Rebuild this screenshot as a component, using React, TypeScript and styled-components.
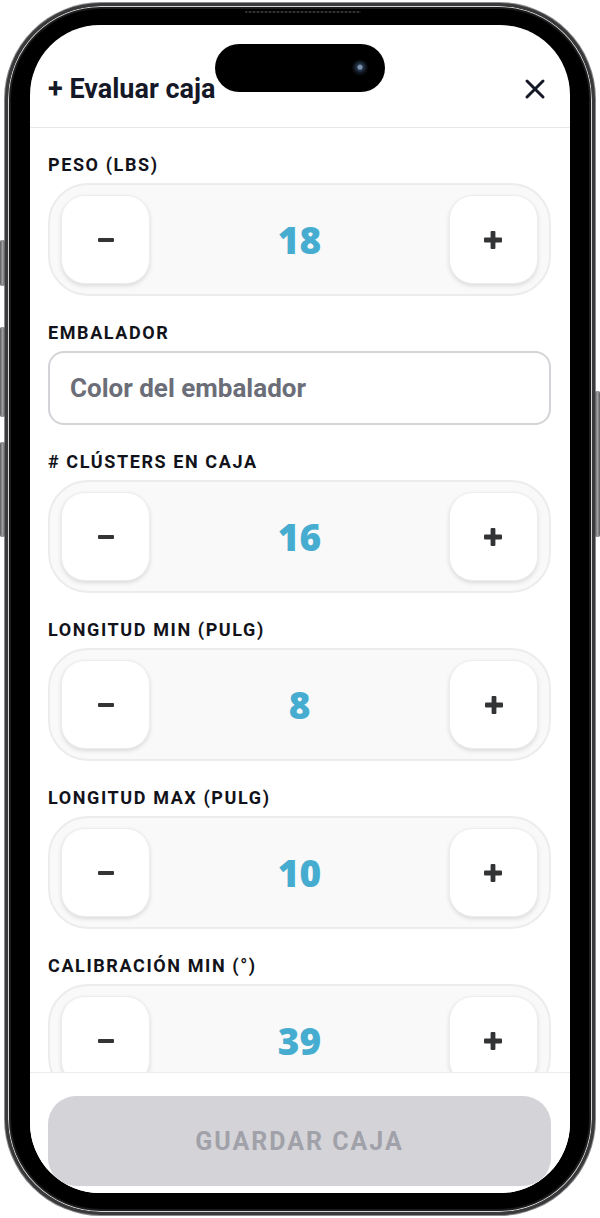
import styled, { createGlobalStyle } from "styled-components";

const GlobalStyle = createGlobalStyle`
    * {
        box-sizing: border-box;
    }
    html, body {
        margin: 0;
        padding: 0;
        background: #ffffff;
        font-family: Roboto, "Liberation Sans", sans-serif;
    }
`;

type Field = { label: string; value?: number; placeholder?: string };

const fields: Field[] = [
    { label: "PESO (LBS)", value: 18 },
    { label: "EMBALADOR", placeholder: "Color del embalador" },
    { label: "# CLÚSTERS EN CAJA", value: 16 },
    { label: "LONGITUD MIN (PULG)", value: 8 },
    { label: "LONGITUD MAX (PULG)", value: 10 },
    { label: "CALIBRACIÓN MIN (°)", value: 39 },
];

const MinusIcon = () => (
    <svg width="18" height="18" viewBox="0 0 18 18">
        <rect x="1" y="7" width="16" height="4" rx="1" fill="#333436" />
    </svg>
);

const PlusIcon = () => (
    <svg width="20" height="20" viewBox="0 0 20 20">
        <rect x="1" y="7.6" width="18" height="4.8" rx="1" fill="#333436" />
        <rect x="7.6" y="1" width="4.8" height="18" rx="1" fill="#333436" />
    </svg>
);

const CloseIcon = () => (
    <svg width="22" height="22" viewBox="0 0 22 22">
        <path d="M3 3 L19 19 M19 3 L3 19" stroke="#141827" strokeWidth="3" strokeLinecap="round" />
    </svg>
);

export default function App() {
    return (
        <>
            <GlobalStyle />
            <Page>
                <Phone>
                    <SideButton side="left" top={234} length={46} />
                    <SideButton side="left" top={321} length={90} />
                    <SideButton side="left" top={436} length={95} />
                    <SideButton side="right" top={385} length={146} />
                    <Grille />
                    <Screen>
                        <Island>
                            <Camera />
                        </Island>
                        <Header>
                            <Title>+ Evaluar caja</Title>
                            <CloseButton aria-label="Cerrar">
                                <CloseIcon />
                            </CloseButton>
                        </Header>
                        <Content>
                            {fields.map((field) => (
                                <Section key={field.label}>
                                    <Label>{field.label}</Label>
                                    {field.placeholder ? (
                                        <TextInput placeholder={field.placeholder} />
                                    ) : (
                                        <Stepper>
                                            <StepButton aria-label="Restar">
                                                <MinusIcon />
                                            </StepButton>
                                            <Value>{field.value}</Value>
                                            <StepButton aria-label="Sumar">
                                                <PlusIcon />
                                            </StepButton>
                                        </Stepper>
                                    )}
                                </Section>
                            ))}
                        </Content>
                        <Footer>
                            <SaveButton disabled>GUARDAR CAJA</SaveButton>
                        </Footer>
                    </Screen>
                </Phone>
            </Page>
        </>
    );
}

const Page = styled.div`
    width: 600px;
    height: 1218px;
    padding-top: 3px;
    background: #ffffff;
    overflow: hidden;
`;

const Phone = styled.div`
    position: relative;
    width: 590px;
    height: 1212px;
    margin: 0 auto;
    padding: 19px 22px;
    border-radius: 96px;
    border: 3px solid #3a3a3c;
    background: #000000;
    box-shadow: 0 0 0 1px #8c8c8e, inset 0 0 0 1px #d6d6d6, inset 0 0 0 3px #1c1c1c;
`;

const SideButton = styled.div<{ side: "left" | "right"; top: number; length: number }>`
    position: absolute;
    top: ${(p) => p.top}px;
    ${(p) => (p.side === "left" ? "left: -8px;" : "right: -8px;")}
    width: 5px;
    height: ${(p) => p.length}px;
    border-radius: 2px;
    background: linear-gradient(90deg, #5a5a5c, #a0a0a2, #5a5a5c);
`;

const Grille = styled.div`
    position: absolute;
    top: 5px;
    left: 237px;
    width: 116px;
    height: 2px;
    border-radius: 1px;
    background: repeating-linear-gradient(90deg, #333 0 2px, #111 2px 4px);
`;

const Screen = styled.div`
    position: relative;
    display: flex;
    flex-direction: column;
    width: 540px;
    height: 1168px;
    border-radius: 70px;
    overflow: hidden;
    background: #ffffff;
`;

const Island = styled.div`
    position: absolute;
    top: 19px;
    left: 185px;
    width: 170px;
    height: 48px;
    border-radius: 24px;
    background: #000000;
    display: flex;
    align-items: center;
    justify-content: flex-end;
    padding-right: 17px;
    z-index: 2;
`;

const Camera = styled.div`
    width: 16px;
    height: 16px;
    border-radius: 50%;
    background: radial-gradient(circle at 50% 45%, #7d93ab 0 2px, #2a3a50 3px, #0e141d 6px, #06070a 8px);
`;

const Header = styled.div`
    flex: none;
    display: flex;
    align-items: center;
    justify-content: space-between;
    height: 103px;
    padding: 25px 24px 0 18px;
    border-bottom: 1px solid #e6e6e8;
`;

const Title = styled.h1`
    margin: 0;
    font-size: 27px;
    font-weight: 700;
    color: #141827;
`;

const CloseButton = styled.button`
    display: flex;
    align-items: center;
    justify-content: center;
    padding: 0;
    border: none;
    background: none;
`;

const Content = styled.div`
    flex: 1;
    overflow: hidden;
    display: flex;
    flex-direction: column;
    gap: 27px;
    padding: 27px 19px 0 18px;
`;

const Section = styled.div`
    display: flex;
    flex-direction: column;
    gap: 8px;
    flex: none;
`;

const Label = styled.span`
    font-size: 18px;
    line-height: 20px;
    font-weight: 700;
    letter-spacing: 1.6px;
    color: #12131a;
`;

const Stepper = styled.div`
    display: flex;
    align-items: center;
    justify-content: space-between;
    height: 113px;
    padding: 0 11px;
    border-radius: 40px;
    border: 2px solid #ececee;
    background: #f9f9f9;
`;

const StepButton = styled.button`
    display: flex;
    align-items: center;
    justify-content: center;
    width: 89px;
    height: 89px;
    border-radius: 24px;
    border: 1px solid #ededed;
    background: #ffffff;
    box-shadow: 0 2px 4px rgba(0, 0, 0, 0.12);
`;

const Value = styled.span`
    font-family: "Open Sans", Roboto, sans-serif;
    font-size: 37px;
    font-weight: 800;
    color: #47add0;
`;

const TextInput = styled.input`
    height: 74px;
    padding: 0 20px;
    border-radius: 16px;
    border: 2px solid #d4d4d8;
    background: #ffffff;
    font-family: Roboto, "Liberation Sans", sans-serif;
    font-size: 26px;
    font-weight: 700;
    outline: none;

    &::placeholder {
        color: #6b6e78;
    }
`;

const Footer = styled.div`
    flex: none;
    height: 121px;
    padding: 23px 19px 0 18px;
    border-top: 1px solid #ececee;
    background: #ffffff;
`;

const SaveButton = styled.button`
    width: 100%;
    height: 90px;
    border: none;
    border-radius: 28px;
    background: #d4d4d8;
    font-family: Roboto, "Liberation Sans", sans-serif;
    font-size: 25px;
    font-weight: 700;
    letter-spacing: 2px;
    color: #a1a1a9;
`;
